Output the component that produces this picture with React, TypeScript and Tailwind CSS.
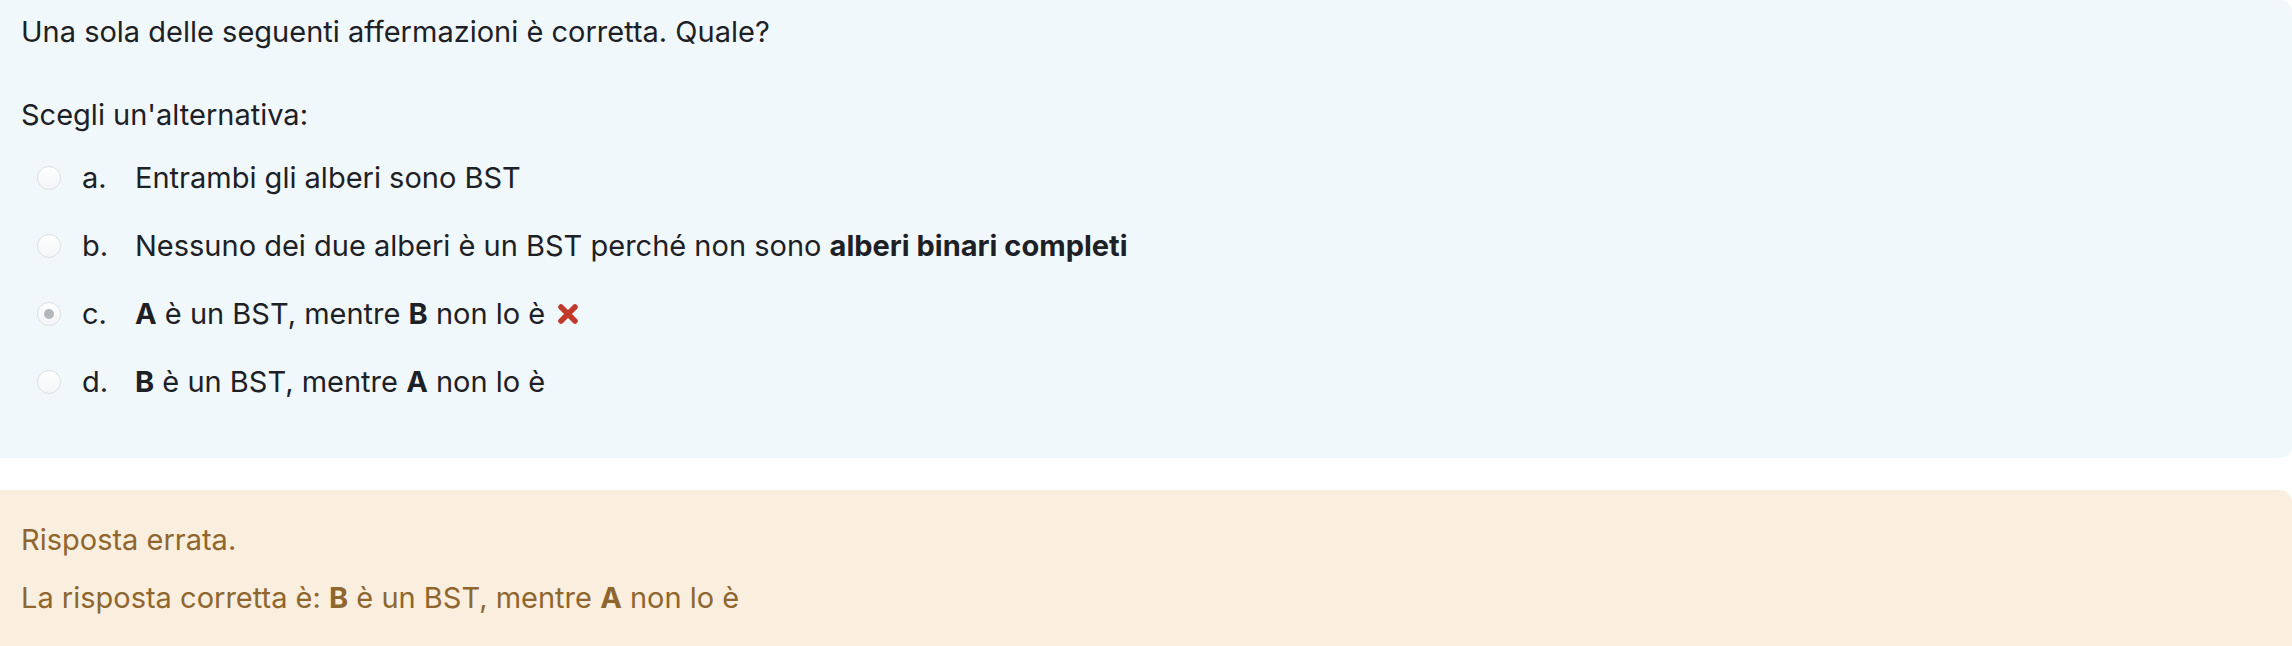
import React from "react";

type Option = {
  letter: string;
  content: React.ReactNode;
  checked?: boolean;
  wrong?: boolean;
};

const options: Option[] = [
  { letter: "a.", content: <>Entrambi gli alberi sono BST</> },
  {
    letter: "b.",
    content: (
      <>
        Nessuno dei due alberi è un BST perché non sono{" "}
        <strong className="font-bold">alberi binari completi</strong>
      </>
    ),
  },
  {
    letter: "c.",
    content: (
      <>
        <strong className="font-bold">A</strong> è un BST, mentre{" "}
        <strong className="font-bold">B</strong> non lo è
      </>
    ),
    checked: true,
    wrong: true,
  },
  {
    letter: "d.",
    content: (
      <>
        <strong className="font-bold">B</strong> è un BST, mentre{" "}
        <strong className="font-bold">A</strong> non lo è
      </>
    ),
  },
];

const Radio = ({ checked }: { checked?: boolean }) => (
  <span className="flex h-[24px] w-[24px] shrink-0 items-center justify-center rounded-full border border-[#dcdfe3] bg-gradient-to-b from-white to-[#f3f5f7]">
    {checked && <span className="h-[10px] w-[10px] rounded-full bg-[#b4b8bd]" />}
  </span>
);

const WrongIcon = () => (
  <svg width="22" height="22" viewBox="0 0 22 22" className="ml-[12px] shrink-0">
    <path d="M4 4 L18 18 M18 4 L4 18" stroke="#c0392b" strokeWidth="5.5" strokeLinecap="round" />
  </svg>
);

export default function App() {
  return (
    <div
      className="min-h-screen bg-white text-[29px] leading-[42px] text-[#1d2125]"
      style={{ fontFamily: "Inter, 'Noto Sans', sans-serif" }}
    >
      <div className="h-[458px] rounded-r-[12px] bg-[#f1f8fb] pl-[21px] pt-[11px]">
        <p>Una sola delle seguenti affermazioni è corretta. Quale?</p>
        <p className="mt-[41px]">Scegli un'alternativa:</p>
        <div className="mt-[8px] flex flex-col">
          {options.map((o) => (
            <div key={o.letter} className="flex h-[68px] items-center pl-[16px]">
              <Radio checked={o.checked} />
              <span className="ml-[21px] w-[53px] shrink-0">{o.letter}</span>
              <span>{o.content}</span>
              {o.wrong && <WrongIcon />}
            </div>
          ))}
        </div>
      </div>
      <div className="mt-[32px] h-[160px] rounded-tr-[12px] bg-[#faeedf] pl-[21px] pt-[29px] text-[#8e662e]">
        <p>Risposta errata.</p>
        <p className="mt-[16px]">
          La risposta corretta è: <strong className="font-bold">B</strong> è un BST, mentre{" "}
          <strong className="font-bold">A</strong> non lo è
        </p>
      </div>
    </div>
  );
}
